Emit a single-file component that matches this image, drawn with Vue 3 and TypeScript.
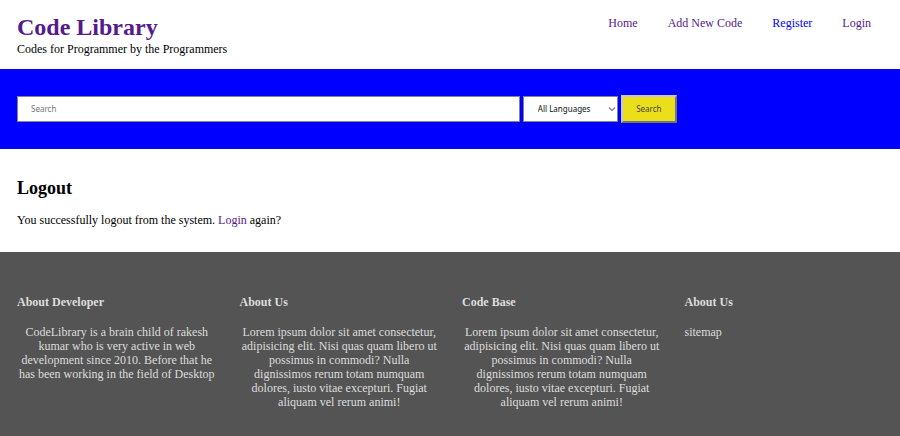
<script setup lang="ts">
import { ref } from 'vue'

interface NavLink {
  label: string
  visited: boolean
}

interface FooterColumn {
  title: string
  text?: string
  link?: string
}

const lorem =
  'Lorem ipsum dolor sit amet consectetur, adipisicing elit. Nisi quas quam libero ut possimus in commodi? Nulla dignissimos rerum totam numquam dolores, iusto vitae excepturi. Fugiat aliquam vel rerum animi!'

const links: NavLink[] = [
  { label: 'Home', visited: true },
  { label: 'Add New Code', visited: true },
  { label: 'Register', visited: false },
  { label: 'Login', visited: true },
]

const columns: FooterColumn[] = [
  {
    title: 'About Developer',
    text: 'CodeLibrary is a brain child of rakesh kumar who is very active in web development since 2010. Before that he has been working in the field of Desktop',
  },
  { title: 'About Us', text: lorem },
  { title: 'Code Base', text: lorem },
  { title: 'About Us', link: 'sitemap' },
]

const query = ref('')
const language = ref('all')
</script>

<template>
  <div class="page">
    <header class="header">
      <div>
        <h1 class="brand"><a class="visited" href="#">Code Library</a></h1>
        <p class="tagline">Codes for Programmer by the Programmers</p>
      </div>
      <nav class="nav">
        <a v-for="link in links" :key="link.label" href="#" :class="{ visited: link.visited }">{{ link.label }}</a>
      </nav>
    </header>

    <form class="search" @submit.prevent>
      <input v-model="query" class="field query" type="text" placeholder="Search" aria-label="Search" />
      <div class="picker">
        <select v-model="language" class="field language" aria-label="Language">
          <option value="all">All Languages</option>
        </select>
        <svg class="chevron" viewBox="0 0 8 6" aria-hidden="true">
          <path d="M1 1.5 4 4.5 7 1.5" fill="none" stroke="#777" stroke-width="1.1" />
        </svg>
      </div>
      <button class="submit" type="submit">Search</button>
    </form>

    <main class="content">
      <h2>Logout</h2>
      <p>You successfully logout from the system. <a class="visited" href="#">Login</a> again?</p>
    </main>

    <footer class="footer">
      <section v-for="(column, index) in columns" :key="index">
        <h4>{{ column.title }}</h4>
        <p v-if="column.text">{{ column.text }}</p>
        <a v-if="column.link" href="#">{{ column.link }}</a>
      </section>
    </footer>
  </div>
</template>

<style>
body {
  margin: 0;
  background: #fff;
}
</style>

<style scoped>
.page {
  display: flex;
  flex-direction: column;
  min-height: 100vh;
  color: #000;
  font-family: 'Liberation Serif', 'Times New Roman', serif;
  font-size: 12px;
  line-height: 14px;
}

h1,
h2,
h4,
p {
  margin: 0;
}

a {
  color: #00f;
  text-decoration: none;
}

a.visited {
  color: #551a8b;
}

.header {
  display: flex;
  justify-content: space-between;
  padding: 13px 16px 13px 17px;
}

.brand {
  font-size: 24px;
  line-height: 29px;
}

.nav {
  display: flex;
  gap: 30px;
  padding: 3px 13px 0 0;
}

.search {
  display: flex;
  align-items: center;
  gap: 3px;
  padding: 26px 16px 26px 17px;
  background: #00f;
}

.field,
.submit {
  box-sizing: border-box;
  margin: 0;
  border-radius: 0;
  font-family: 'Noto Sans', sans-serif;
  font-size: 8px;
}

.field {
  height: 26px;
  border: 1px solid #858585;
  background: #fff;
  color: #111;
}

.query {
  width: 58%;
  padding: 0 13px 1px;
}

.query::placeholder {
  color: #757575;
  opacity: 1;
}

.picker {
  position: relative;
  width: 11%;
}

.language {
  display: block;
  width: 100%;
  padding: 0 14px 1px;
  appearance: none;
}

.chevron {
  position: absolute;
  top: 10px;
  right: 2px;
  width: 8px;
  height: 6px;
  pointer-events: none;
}

.submit {
  height: 28px;
  padding: 0 13px 1px;
  border: 2px outset #c8c8c8;
  background: #ebdf1c;
  color: #444;
}

.content {
  padding: 29px 16px 25px 17px;
}

.content h2 {
  margin-bottom: 14px;
  font-size: 18px;
  line-height: 21px;
}

.footer {
  display: grid;
  flex: 1;
  grid-template-columns: repeat(4, 1fr);
  gap: 23px;
  padding: 43px 16px 26px 17px;
  background: #545454;
  color: #ddd;
}

.footer h4 {
  margin-bottom: 16px;
  font-size: 12px;
}

.footer p {
  text-align: center;
}

.footer a {
  color: inherit;
}
</style>
